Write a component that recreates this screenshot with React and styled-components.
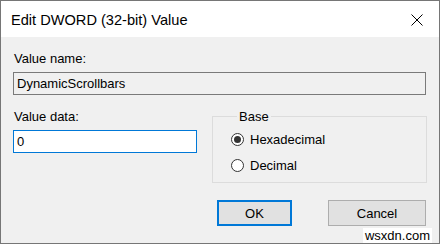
import React, { useState } from 'react';
import styled, { createGlobalStyle } from 'styled-components';

const GlobalStyle = createGlobalStyle`
    html, body {
        margin: 0;
        padding: 0;
        background: #ffffff;
    }
    * {
        box-sizing: border-box;
    }
`;

function App() {
    const [base, setBase] = useState('hex');
    const [data, setData] = useState('0');

    return (
        <>
            <GlobalStyle />
            <Page>
                <Window>
                    <TitleBar>
                        <Title>Edit DWORD (32-bit) Value</Title>
                        <CloseButton aria-label="Close">
                            <svg width="12" height="12" viewBox="0 0 12 12">
                                <path d="M0.5 0.5 L11.5 11.5 M11.5 0.5 L0.5 11.5" stroke="#000" strokeWidth="1" fill="none" />
                            </svg>
                        </CloseButton>
                    </TitleBar>

                    <Body>
                        <Label>Value name:</Label>
                        <TextField readOnly value="DynamicScrollbars" />

                        <DataRow>
                            <div>
                                <Label>Value data:</Label>
                                <TextField $focused $width={184} value={data} onChange={(e) => setData(e.target.value)} />
                            </div>

                            <GroupBox>
                                <legend>Base</legend>
                                <RadioRow onClick={() => setBase('hex')}>
                                    <RadioDot $checked={base === 'hex'} />
                                    Hexadecimal
                                </RadioRow>
                                <RadioRow onClick={() => setBase('dec')}>
                                    <RadioDot $checked={base === 'dec'} />
                                    Decimal
                                </RadioRow>
                            </GroupBox>
                        </DataRow>

                        <ButtonRow>
                            <Button $primary $width={75}>OK</Button>
                            <Button $width={98}>Cancel</Button>
                        </ButtonRow>
                    </Body>
                </Window>
                <Watermark>wsxdn.com</Watermark>
            </Page>
        </>
    );
}

export default App;

const Page = styled.div`
    position: relative;
    width: 440px;
    height: 245px;
    font-family: "Liberation Sans", Arial, sans-serif;
    color: #000;
`;

const Window = styled.div`
    width: 440px;
    height: 244px;
    border: 1px solid #767676;
    display: flex;
    flex-direction: column;
    background: #f0f0f0;
`;

const TitleBar = styled.div`
    height: 36px;
    background: #ffffff;
    display: flex;
    align-items: center;
    justify-content: space-between;
    padding: 0 16px 0 10px;
`;

const Title = styled.div`
    font-size: 14.6px;
    line-height: 18px;
    padding-top: 1px;
`;

const CloseButton = styled.div`
    width: 12px;
    height: 12px;
    display: flex;
    margin-top: 1px;
`;

const Body = styled.div`
    flex: 1;
    padding: 14px 12px 0 12px;
    font-size: 13px;
`;

const Label = styled.div`
    font-size: 13px;
    line-height: 15px;
    padding-left: 1px;
`;

const TextField = styled.input`
    display: block;
    width: ${(p) => (p.$width ? `${p.$width}px` : 'calc(100% - 1px)')};
    height: 23px;
    margin: ${(p) => (p.$focused ? '6px' : '6px')} 0 0 0;
    padding: 0 3px;
    font-family: "Liberation Sans", Arial, sans-serif;
    font-size: 13px;
    color: #000;
    border: 1px solid ${(p) => (p.$focused ? '#0078d7' : '#7a7a7a')};
    background: ${(p) => (p.$focused ? '#ffffff' : '#f0f0f0')};
    outline: none;
`;

const DataRow = styled.div`
    display: grid;
    grid-template-columns: 184px 1fr;
    column-gap: 15px;
    margin-top: 14px;
`;

const GroupBox = styled.fieldset`
    margin: 0;
    padding: 6px 0 8px 18px;
    border: 1px solid #dcdcdc;
    min-width: 0;

    legend {
        font-size: 13px;
        line-height: 15px;
        padding: 0 2px;
        margin-left: 6px;
    }
`;

const RadioRow = styled.div`
    display: flex;
    align-items: center;
    gap: 6px;
    height: 18px;
    font-size: 13px;
    cursor: default;

    & + & {
        margin-top: 8px;
    }
`;

const RadioDot = styled.span`
    position: relative;
    width: 13px;
    height: 13px;
    border-radius: 50%;
    border: 1px solid #333333;
    background: #ffffff;
    flex-shrink: 0;

    &::after {
        content: '';
        display: ${(p) => (p.$checked ? 'block' : 'none')};
        position: absolute;
        left: 2px;
        top: 2px;
        width: 7px;
        height: 7px;
        border-radius: 50%;
        background: #333333;
    }
`;

const ButtonRow = styled.div`
    display: flex;
    justify-content: flex-end;
    gap: 36px;
    margin-top: 17px;
    padding-right: 1px;
`;

const Button = styled.button`
    width: ${(p) => p.$width}px;
    height: 26px;
    font-family: "Liberation Sans", Arial, sans-serif;
    font-size: 13px;
    color: #000;
    background: #e1e1e1;
    border: ${(p) => (p.$primary ? '2px solid #0078d7' : '1px solid #adadad')};
    padding: 0;
`;

const Watermark = styled.div`
    position: absolute;
    left: 363px;
    top: 228px;
    width: 69px;
    height: 15px;
    background: #ffffff;
    font-size: 13px;
    line-height: 15px;
    text-align: center;
`;
